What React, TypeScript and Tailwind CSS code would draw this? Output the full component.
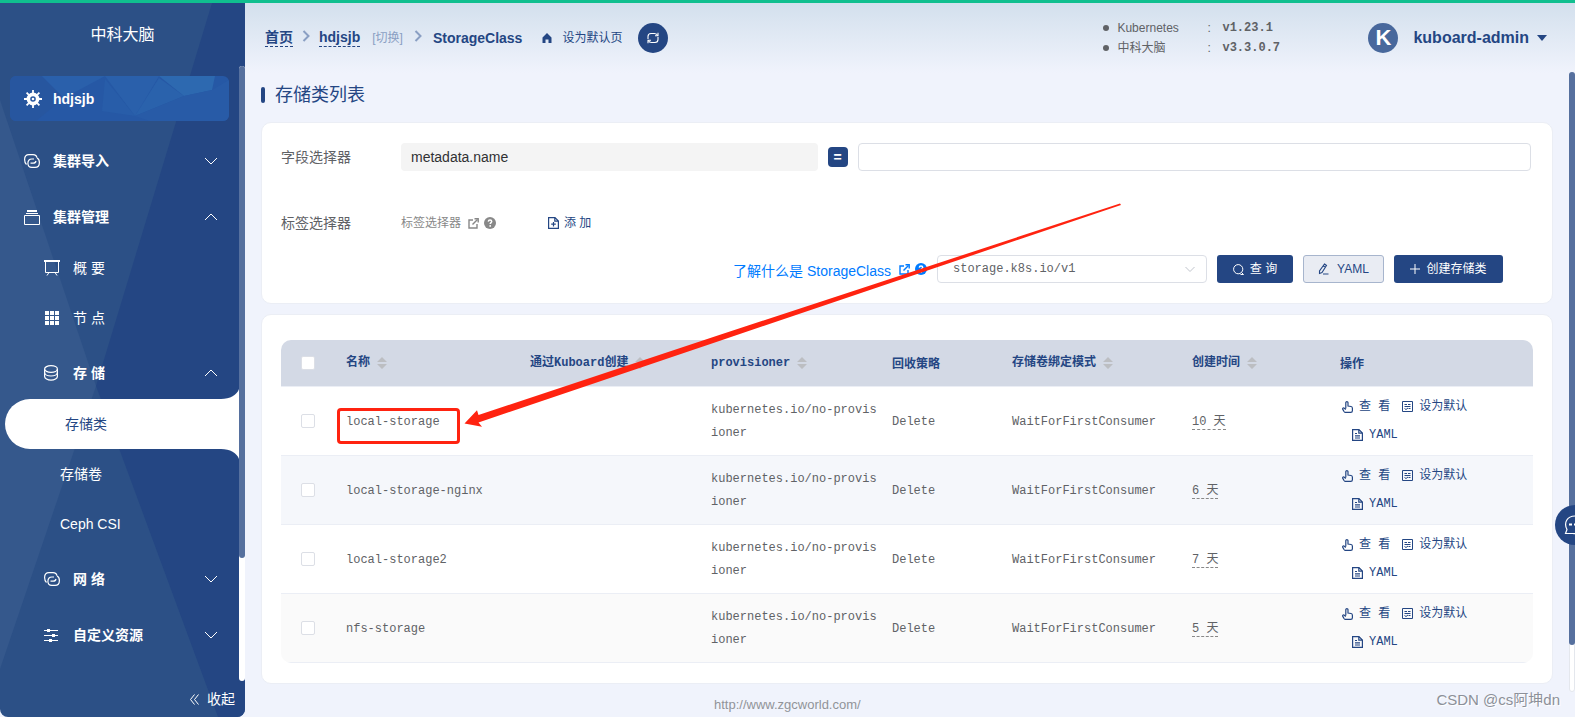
import type { ReactNode } from 'react';

interface StorageClass {
  name: string;
  age: string;
  rowClass: string;
}

const storageClasses: StorageClass[] = [
  { name: 'local-storage', age: '10 天', rowClass: 'bg-white' },
  { name: 'local-storage-nginx', age: '6 天', rowClass: 'bg-[#f5f7fb]' },
  { name: 'local-storage2', age: '7 天', rowClass: 'bg-white' },
  { name: 'nfs-storage', age: '5 天', rowClass: 'bg-[#fafafa]' },
];

function Chevron({ up = false }: { up?: boolean }) {
  return (
    <svg viewBox="0 0 14 8" width="14" height="8" fill="none" stroke="currentColor">
      <path d={up ? 'M1 7l6-6 6 6' : 'M1 1l6 6 6-6'} />
    </svg>
  );
}

function CrumbArrow() {
  return (
    <svg className="mb-1" viewBox="0 0 8 12" width="8" height="12" fill="none" stroke="#8a9fc3" strokeWidth="2">
      <path d="M1.5 1l5 5-5 5" />
    </svg>
  );
}

function ConnectionIcon() {
  return (
    <svg viewBox="0 0 16 14" width="16" height="14" fill="none" stroke="currentColor" strokeWidth="1.2">
      <path d="M2.5 10.5C1.2 9.4.6 7.600.6 5.500C.6 2.400 2.400.6 5 .6h4c2.300 0 3.700 1.200 3.900 3.100" />
      <path d="M6.500 9.200h2.700c1.600 0 2.500-.8 2.800-2.200" />
      <path d="M13 4c1.600.7 2.400 2.300 2.400 4.400c0 3-1.800 5-4.400 5H7.800c-2.300 0-3.900-1.700-3.900-4.200S5.500 5 7.800 5h2.200" />
    </svg>
  );
}

function GearIcon() {
  return (
    <svg viewBox="0 0 18 18" width="18" height="18" fill="none" stroke="currentColor">
      <circle cx="9" cy="9" r="4.6" strokeWidth="3.6" />
      <circle cx="9" cy="9" r="1.3" fill="currentColor" stroke="none" />
      <path
        strokeWidth="1.8"
        d="M9 0v3M9 15v3M0 9h3M15 9h3M2.6 2.6l2.2 2.2M13.2 13.2l2.2 2.2M2.6 15.4l2.2-2.2M13.2 4.8l2.2-2.2"
      />
    </svg>
  );
}

function FilesIcon() {
  return (
    <svg viewBox="0 0 16 15" width="16" height="15" fill="none" stroke="currentColor">
      <path d="M3 1h10" strokeWidth="2" />
      <path d="M2 3.500h12" />
      <path d="M.5 5.500h15v9H.5z" />
    </svg>
  );
}

function BoardIcon() {
  return (
    <svg viewBox="0 0 16 16" width="16" height="16" fill="none" stroke="currentColor">
      <path d="M0 1h16" strokeWidth="2" />
      <path d="M1.5 2v10.500h13V2M5 12.500l-2 3M11 12.500l2 3" />
    </svg>
  );
}

function GridIcon() {
  return (
    <svg viewBox="0 0 14 14" width="14" height="14" fill="currentColor">
      <path d="M0 0h4v4H0zM5 0h4v4H5zM10 0h4v4h-4zM0 5h4v4H0zM5 5h4v4H5zM10 5h4v4h-4zM0 10h4v4H0zM5 10h4v4H5zM10 10h4v4h-4z" />
    </svg>
  );
}

function CoinIcon() {
  return (
    <svg viewBox="0 0 14 16" width="14" height="16" fill="none" stroke="currentColor" strokeWidth="1.2">
      <ellipse cx="7" cy="4" rx="6.4" ry="3.4" />
      <path d="M.6 4v7.500C.6 13.500 3.500 15.200 7 15.200s6.400-1.700 6.400-3.700V4" />
      <path d="M.6 7.500C.6 9.500 3.500 11 7 11s6.400-1.500 6.400-3.500" />
    </svg>
  );
}

function SlidersIcon() {
  return (
    <svg viewBox="0 0 14 14" width="14" height="14" stroke="currentColor">
      <path d="M0 2.500h14M0 7.500h14M0 12.500h14" />
      <path d="M3 2.500h3M8 7.500h3M5 12.500h3" strokeWidth="3" />
    </svg>
  );
}

function ExternalIcon() {
  return (
    <svg viewBox="0 0 11 11" width="11" height="11" fill="none" stroke="currentColor" strokeWidth="1.4">
      <path d="M5 2H1v8h8V6" />
      <path d="M4.500 6.500L9.500 1.500" />
      <path d="M6.500.8h3.700v3.700" />
    </svg>
  );
}

function HelpIcon() {
  return (
    <svg viewBox="0 0 12 12" width="12" height="12" fill="none">
      <circle cx="6" cy="6" r="6" fill="currentColor" />
      <path d="M4.3 4.6c.1-1 .8-1.5 1.7-1.5s1.7.6 1.700 1.400C7.700 5.600 6.200 5.600 6.200 7" stroke="#fff" strokeWidth="1.5" />
      <circle cx="6.2" cy="8.9" r=".9" fill="#fff" />
    </svg>
  );
}

function DocumentIcon({ plus = false }: { plus?: boolean }) {
  return (
    <svg viewBox="0 0 11 12" width="11" height="12" fill="none" stroke="currentColor" strokeWidth="1.2">
      <path d="M.6.6h6.400l3.400 3.400v7.400H.6zM6.800.8v3.400h3.400" />
      <path d={plus ? 'M5.500 5v4.500M3.200 7.200h4.600' : 'M3 4.500h2M3 6.800h5M3 9h5'} />
    </svg>
  );
}

function PointerIcon() {
  return (
    <svg viewBox="0 0 11 12" width="11" height="12" fill="none" stroke="currentColor" strokeWidth="1.2">
      <path d="M3.800 7.600V1.800c0-1.500 2.200-1.500 2.200 0V5l3 .5c1.100.2 1.400.8 1.400 1.700v2.500c0 1.100-.6 1.700-1.600 1.700H3.600c-.7 0-1.200-.3-1.600-.9L.8 8.400c-.5-1 .4-1.800 1.200-1.300l1.800 1.300" />
    </svg>
  );
}

function SetDefaultIcon() {
  return (
    <svg viewBox="0 0 11 11" width="11" height="11" fill="none" stroke="currentColor">
      <path d="M.5.5h10v10H.5zM2.500 3.500h2.500M6 3.500h2.500M2.500 5.500h6M6.500 7.500h2M2.500 7.500l1.500 1 2-1.500" />
    </svg>
  );
}

function SortCaret() {
  return (
    <svg viewBox="0 0 10 12" width="10" height="12" fill="#bcbec2">
      <path d="M5 0l5 5H0zM5 12l5-5H0z" />
    </svg>
  );
}

interface MenuTitleProps {
  icon: ReactNode;
  label: string;
  open?: boolean;
  nested?: boolean;
}

function MenuTitle({ icon, label, open = false, nested = false }: MenuTitleProps) {
  return (
    <button
      type="button"
      className={`flex h-14 w-full items-center pt-1 pr-[21px] text-left font-bold ${nested ? 'pl-11' : 'pl-6'}`}
    >
      <span className="flex w-[29px] shrink-0">{icon}</span>
      <span className="flex-1">{label}</span>
      <Chevron up={open} />
    </button>
  );
}

function Sidebar() {
  return (
    <aside className="relative flex w-[245px] shrink-0 flex-col overflow-hidden rounded-b-lg bg-[#2c5086] text-sm text-white">
      {/* background facets */}
      <svg className="absolute inset-0 h-full w-full" viewBox="0 0 245 714" preserveAspectRatio="none">
        <path d="M212 0H245V714H218L96 383z" fill="#244683" />
        <path d="M0 97L96 383L0 666z" fill="#35588c" />
      </svg>

      <div className="relative flex h-[63px] shrink-0 items-center justify-center text-base">中科大脑</div>

      <div className="relative flex flex-1">
        <nav className="min-w-0 flex-1 pt-2.5">
          <a
            href="#cluster"
            className="relative mx-2.5 mb-2.5 flex h-[45px] items-center overflow-hidden rounded-md bg-[#2658a5] pl-3.5 font-bold"
          >
            <svg className="absolute inset-0 h-full w-full" viewBox="0 0 219 45" preserveAspectRatio="none">
              <path d="M0 0h32l22 22-28 23H0z" fill="#27569f" />
              <path d="M32 0h63L54 22z" fill="#2a60ab" />
              <path d="M95 0h54l-24 40z" fill="#2a60ab" />
              <path d="M149 0h56l-3 14-28 6z" fill="#2d69b0" />
              <path d="M149 2l25 18-49 20z" fill="#2a62ac" />
              <path d="M95 3l30 37-33-5z" fill="#285da9" />
              <path d="M174 20l28-6 17-10v41H140l-15-5z" fill="#285ba7" />
            </svg>
            <span className="relative flex w-[29px]">
              <GearIcon />
            </span>
            <span className="relative">hdjsjb</span>
          </a>

          <MenuTitle icon={<ConnectionIcon />} label="集群导入" />
          <MenuTitle icon={<FilesIcon />} label="集群管理" open />
          <a href="#overview" className="flex h-[50px] items-center pl-11">
            <span className="w-[29px]">
              <BoardIcon />
            </span>
            概 要
          </a>
          <a href="#nodes" className="flex h-[50px] items-center pl-[45px]">
            <span className="w-7">
              <GridIcon />
            </span>
            节 点
          </a>
          <MenuTitle icon={<CoinIcon />} label="存 储" open nested />
          <a
            href="#storageclass"
            className="relative ml-[5px] flex h-[50px] items-center rounded-l-full bg-white pl-[60px] text-[#244683]"
          >
            <svg className="absolute -top-2.5 right-0" viewBox="0 0 18 10" width="18" height="10" fill="#fff">
              <path d="M18 0C16 6 9 10 0 10H18z" />
            </svg>
            存储类
            <svg className="absolute -bottom-2.5 right-0" viewBox="0 0 18 10" width="18" height="10" fill="#fff">
              <path d="M18 10C16 4 9 0 0 0H18z" />
            </svg>
          </a>
          <a href="#pv" className="flex h-[50px] items-center pl-[60px]">
            存储卷
          </a>
          <a href="#ceph" className="flex h-[50px] items-center pl-[60px]">
            Ceph CSI
          </a>
          <MenuTitle icon={<ConnectionIcon />} label="网 络" nested />
          <MenuTitle icon={<SlidersIcon />} label="自定义资源" nested />
        </nav>
        <div className="w-1.5 rounded-full bg-white">
          <div className="h-4/5 rounded-full bg-[#56709e]" />
        </div>
      </div>

      <button type="button" className="relative flex h-9 shrink-0 items-center justify-end gap-2 pr-2.5">
        <svg viewBox="0 0 9 11" width="9" height="11" fill="none" stroke="currentColor">
          <path d="M4.500.5l-4 5 4 5M8.500.5l-4 5 4 5" />
        </svg>
        收起
      </button>
    </aside>
  );
}

function VersionRow({ label, version }: { label: string; version: string }) {
  return (
    <li className="flex h-5 items-center">
      <span className="mr-2 h-1.5 w-1.5 rounded-full bg-[#606266]" />
      <span className="w-[90px]">{label}</span>
      <span className="w-[15px]">:</span>
      <span className="font-['Liberation_Mono','Noto_Sans_CJK_SC',monospace] font-bold">{version}</span>
    </li>
  );
}

function Header() {
  return (
    <header className="flex h-[70px] shrink-0 items-center bg-linear-to-b from-[#d3e0ed] to-[#f0f3fc] pl-5 pr-7 text-[#244683]">
      <nav className="flex flex-1 items-center text-sm font-bold">
        <a href="#home" className="border-b border-dashed border-[#244683] leading-[17px]">
          首页
        </a>
        <span className="flex w-[26px] justify-center">
          <CrumbArrow />
        </span>
        <a href="#cluster" className="border-b border-dashed border-[#244683] leading-[17px]">
          hdjsjb
        </a>
        <a href="#switch" className="ml-3 text-xs font-normal text-[#8a9fc3]">
          [切换]
        </a>
        <span className="flex w-[30px] justify-center">
          <CrumbArrow />
        </span>
        <span>StorageClass</span>
        <a href="#default" className="ml-5 flex items-center gap-2.5 text-xs font-normal">
          <svg viewBox="0 0 10 10" width="10" height="10" fill="currentColor">
            <path d="M5 0l4.500 4.500V10H6.500V6.500h-3V10H.5V4.500z" />
          </svg>
          设为默认页
        </a>
        <button
          type="button"
          aria-label="刷新"
          className="ml-4 flex h-[30px] w-[30px] items-center justify-center rounded-full bg-[#244683] text-white"
        >
          <svg viewBox="0 0 12 12" width="12" height="12" fill="none" stroke="currentColor" strokeWidth="1.1">
            <path d="M1 7V4.500C1 2.800 2.200 1.500 4 1.500h3.500c1.600 0 2.700.8 3.200 2.200M11 5v2.500c0 1.700-1.200 3-3 3H4.500c-1.600 0-2.700-.8-3.200-2.200" />
            <path d="M11 .8v3H8M1 11.200v-3h3" />
          </svg>
        </button>
      </nav>

      <ul className="w-[265px] text-xs text-[#606266]">
        <VersionRow label="Kubernetes" version="v1.23.1" />
        <VersionRow label="中科大脑" version="v3.3.0.7" />
      </ul>

      <button type="button" className="flex items-center font-bold">
        <span className="mr-[15px] flex h-[30px] w-[30px] items-center justify-center rounded-full bg-[#48689c] text-[22px] leading-none text-white">
          K
        </span>
        <span className="text-base">kuboard-admin</span>
        <span className="ml-2 border-x-[5px] border-t-[6px] border-x-transparent border-t-[#244683]" />
      </button>
    </header>
  );
}

function FilterCard() {
  return (
    <section className="rounded-[10px] border border-[#ebeef5] bg-white px-[19px] py-5 text-sm text-[#606266]">
      <div className="flex items-center">
        <label htmlFor="field" className="w-[120px] shrink-0">
          字段选择器
        </label>
        <div className="flex min-w-0 flex-1 items-center gap-2.5">
          <input
            id="field"
            readOnly
            value="metadata.name"
            className="h-7 min-w-0 flex-[14] rounded bg-[#f4f4f4] px-2.5 text-[#303133] outline-none"
          />
          <button
            type="button"
            className="flex h-5 w-5 shrink-0 items-center justify-center rounded bg-[#244683] text-sm font-bold text-white"
          >
            =
          </button>
          <input
            aria-label="字段值"
            className="mr-0.5 h-7 min-w-0 flex-[23] rounded border border-[#dcdfe6] px-2.5 outline-none"
          />
        </div>
      </div>

      <div className="mt-[37px] flex h-[30px] items-center">
        <span className="w-[120px] shrink-0">标签选择器</span>
        <a href="#labels" className="flex w-[147px] items-center text-xs text-[#888]">
          <span className="mr-[7px]">标签选择器</span>
          <ExternalIcon />
          <span className="ml-[5px]">
            <HelpIcon />
          </span>
        </a>
        <button type="button" className="flex items-center gap-[5px] text-xs text-[#244683]">
          <DocumentIcon plus />
          添 加
        </button>
      </div>

      <div className="mt-[17px] flex h-7 items-center justify-end pr-[30px]">
        <a href="#learn" className="mr-2.5 flex items-center text-[#007bff]">
          <span className="mr-2 pt-1">了解什么是 StorageClass</span>
          <ExternalIcon />
          <span className="ml-[5px]">
            <HelpIcon />
          </span>
        </a>
        <div className="relative mr-2.5 text-xs">
          <select
            aria-label="API 版本"
            className="h-7 w-[270px] appearance-none rounded border border-[#dcdfe6] bg-white px-[15px] font-['Liberation_Mono','Noto_Sans_CJK_SC',monospace]"
          >
            <option>storage.k8s.io/v1</option>
          </select>
          <svg
            className="pointer-events-none absolute top-[11px] right-3"
            viewBox="0 0 10 7"
            width="10"
            height="7"
            fill="none"
            stroke="#c0c4cc"
          >
            <path d="M.5 1L5 5.500 9.500 1" />
          </svg>
        </div>
        <button
          type="button"
          className="mr-2.5 flex h-7 w-[76px] items-center justify-center gap-1.5 rounded-[3px] bg-[#244683] text-xs text-white"
        >
          <svg viewBox="0 0 11 11" width="11" height="11" fill="none" stroke="currentColor">
            <circle cx="5.2" cy="5.2" r="4.6" />
            <path d="M7.500 10.500h3M8.500 8.500l2 2" />
          </svg>
          查 询
        </button>
        <button
          type="button"
          className="mr-2.5 flex h-7 w-[81px] items-center justify-center gap-2 rounded-[3px] border border-[#a7b5cd] bg-[#e9ecf3] text-xs text-[#244683]"
        >
          <svg viewBox="0 0 11 12" width="11" height="12" fill="none" stroke="currentColor" strokeWidth="1.1">
            <path d="M6.500 1l2 1.500L4 9.500 1.500 10.500V8zM5.500 3l2 1.500M5 11h5.500" />
          </svg>
          YAML
        </button>
        <button
          type="button"
          className="flex h-7 w-[109px] items-center justify-center gap-1.5 rounded-[3px] bg-[#244683] text-xs text-white"
        >
          <svg viewBox="0 0 10 10" width="10" height="10" stroke="currentColor">
            <path d="M5 0v10M0 5h10" />
          </svg>
          创建存储类
        </button>
      </div>
    </section>
  );
}

function SortableHeader({ label }: { label: string }) {
  return (
    <th className="px-2.5">
      <button type="button" className="flex items-center gap-[7px] whitespace-nowrap font-bold">
        {label}
        <SortCaret />
      </button>
    </th>
  );
}

function RowCheckbox({ label }: { label: string }) {
  return (
    <input
      type="checkbox"
      aria-label={label}
      className="block h-3.5 w-3.5 appearance-none rounded-xs border border-[#dcdfe6] bg-white"
    />
  );
}

function StorageTable() {
  return (
    <section className="rounded-[10px] border border-[#ebeef5] bg-white px-[19px] pt-[25px] pb-5">
      <div className="overflow-hidden rounded-[10px]">
        <table className="w-full table-fixed text-left font-['Liberation_Mono','Noto_Sans_CJK_SC',monospace] text-xs text-[#606266]">
          <colgroup>
            <col className="w-[55px]" />
            <col className="w-[184px]" />
            <col />
            <col />
            <col className="w-[120px]" />
            <col className="w-[180px]" />
            <col className="w-[148px]" />
            <col className="w-[203px]" />
          </colgroup>
          <thead className="bg-[#d3d9e5] text-[#244683]">
            <tr className="h-[46px] border-b border-[#ebeef5]">
              <th className="pl-5">
                <RowCheckbox label="全选" />
              </th>
              <SortableHeader label="名称" />
              <SortableHeader label="通过Kuboard创建" />
              <SortableHeader label="provisioner" />
              <th className="px-2.5 pt-1">回收策略</th>
              <SortableHeader label="存储卷绑定模式" />
              <SortableHeader label="创建时间" />
              <th className="px-2.5 pt-1">操作</th>
            </tr>
          </thead>
          <tbody>
            {storageClasses.map((item) => (
              <tr key={item.name} className={`h-[69px] border-b border-[#ebeef5] ${item.rowClass}`}>
                <td className="pl-5">
                  <RowCheckbox label={item.name} />
                </td>
                <td className="px-2.5 pt-0.5">{item.name}</td>
                <td />
                <td className="pt-0.5 pl-2.5 leading-[23px] break-all">kubernetes.io/no-provisioner</td>
                <td className="px-2.5 pt-0.5">Delete</td>
                <td className="px-2.5 pt-0.5">WaitForFirstConsumer</td>
                <td className="px-2.5 pt-0.5">
                  <span className="border-b border-dashed border-[#888]">{item.age}</span>
                </td>
                <td className="px-3 text-[#244683]">
                  <div className="flex h-7 items-center">
                    <button type="button" className="mr-3 flex items-center gap-1.5">
                      <PointerIcon />
                      查 看
                    </button>
                    <button type="button" className="flex items-center gap-1.5">
                      <SetDefaultIcon />
                      设为默认
                    </button>
                  </div>
                  <button type="button" className="ml-2.5 flex h-7 items-center gap-1.5">
                    <DocumentIcon />
                    YAML
                  </button>
                </td>
              </tr>
            ))}
          </tbody>
        </table>
      </div>
    </section>
  );
}

export default function App() {
  return (
    <div className="relative flex min-h-screen flex-col overflow-hidden border-t-[3px] border-[#10bf8f] bg-[#f0f3fc] font-['Liberation_Sans','Noto_Sans_CJK_SC',sans-serif]">
      <div className="flex flex-1">
        <Sidebar />

        <div className="flex min-w-0 flex-1 flex-col">
          <Header />
          <main className="flex-1 pl-4 pr-[22px]">
            <h1 className="mb-3 flex h-[37px] items-center gap-2.5 pt-1.5 text-lg text-[#244683]">
              <span className="h-4 w-1 rounded-sm bg-[#244683]" />
              存储类列表
            </h1>
            <div className="flex flex-col gap-2.5">
              <FilterCard />
              <StorageTable />
            </div>
          </main>
          <footer className="flex h-[33px] items-center pt-2 pl-[469px] text-[13px] text-[#909399]">
            <a href="#site">http://www.zgcworld.com/</a>
          </footer>
        </div>
      </div>

      {/* page scrollbar */}
      <div className="absolute top-[69px] right-0 bottom-[25px] w-1.5 rounded-full border border-[#e4e7ed] bg-white" />
      <div className="absolute top-[69px] right-0 bottom-[72px] w-1.5 rounded-full bg-[#56709e]" />

      <button
        type="button"
        aria-label="聊天"
        className="absolute top-[502px] -right-5 flex h-10 w-10 items-center rounded-full bg-[#244683] pl-[9px] text-white"
      >
        <svg viewBox="0 0 22 20" width="22" height="20" fill="none" stroke="currentColor" strokeWidth="1.2">
          <path d="M1.500 18.500l1.500-4C-.500 8 3 1 11 1s12 7 9 13c-3 4.500-8 5-11 4.500z" />
          <path d="M5 9.500h3M10 9.500h3M15 9.500h3" strokeWidth="2" />
        </svg>
      </button>

      {/* annotation over the first row */}
      <div className="pointer-events-none absolute top-[405px] left-[337px] h-9 w-[123px] rounded-sm border-[3px] border-[#ff2310]" />
      <svg
        className="pointer-events-none absolute top-[197px] left-[460px]"
        viewBox="460 200 670 240"
        width="670"
        height="240"
        fill="#ff2310"
      >
        <path d="M464.500 423.500L477 410.300L478.500 415L720 334.700L1120 203.500L1121 205L720 340.700L478.500 422.500L482 426.700z" />
      </svg>

      <div className="absolute right-[15px] bottom-1.5 text-[15px] text-[#8c9099] [text-shadow:1px_1px_0_#fff]">
        CSDN @cs阿坤dn
      </div>
    </div>
  );
}
